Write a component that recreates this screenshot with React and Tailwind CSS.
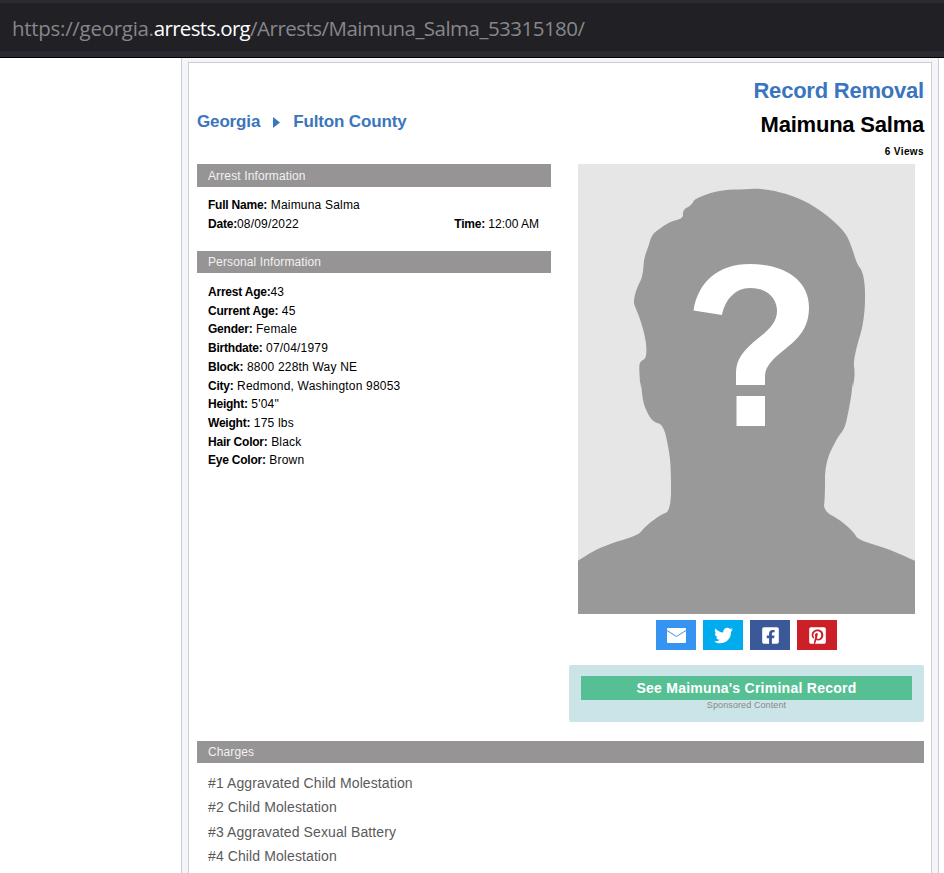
import React from "react";
import { FaTwitter, FaFacebookSquare, FaPinterestSquare } from "react-icons/fa";

const left6 = [[24,542],[75,510],[130,488],[175,475],[210,460],[225,440],[270,405],[303,392],[303,260],[295,200],[280,135],[250,125],[235,105],[220,70],[215,30],[212,0]];
const left5 = [[212,690],[208,640],[208,605],[230,595],[228,540],[210,475],[195,440],[190,425],[200,385],[218,350],[222,295],[235,260],[245,225],[270,205],[300,185],[340,175],[338,150],[365,135],[375,115],[450,90],[520,88],[570,85],[640,98],[710,125],[770,165],[825,215],[845,260],[860,310],[878,335],[885,380],[885,440],[878,500],[860,560],[850,610],[855,640],[848,690]];
const right6 = [[848,0],[845,40],[838,80],[825,145],[800,175],[765,250],[765,350],[760,392],[810,420],[850,455],[865,480],[950,505],[1035,542]];

function smooth(pts) {
  const out = [pts[0]];
  for (let i = 0; i < pts.length - 1; i++) {
    const [ax, ay] = pts[i];
    const [bx, by] = pts[i + 1];
    out.push([ax * 0.75 + bx * 0.25, ay * 0.75 + by * 0.25]);
    out.push([ax * 0.25 + bx * 0.75, ay * 0.25 + by * 0.75]);
  }
  out.push(pts[pts.length - 1]);
  return out;
}

const outline = smooth(smooth([
  ...left6.map(([x, y]) => [x / 3 - 8, y / 3 + 216]),
  ...left5.map(([x, y]) => [x / 3 - 8, y / 3 - 4]),
  ...right6.map(([x, y]) => [x / 3 - 8, y / 3 + 216]),
]));
const silhouette = [...outline, [337, 450], [0, 450]]
  .map(p => p.map(n => n.toFixed(1)).join(","))
  .join(" ");

function Silhouette() {
  return (
    <svg viewBox="0 0 337 450" className="block h-[450px] w-[337px]">
      <rect width="337" height="450" fill="#e6e6e6" />
      <polygon points={silhouette} fill="#999999" />
      <path
        d="M115.5 146.5 L144 151 C147 136 157 124 172 124 C190 124 199 135 199 147 C199 160 188 168 178 176 C166 186 158 195 158 209 L158 221 L187 221 L187 212 C187 202 196 194 206 186 C221 174 231 164 231 143 C231 117 208 100 172 100 C140 100 120 118 115.5 146.5 Z"
        fill="#ffffff"
      />
      <rect x="158.5" y="232" width="28.5" height="30" fill="#ffffff" />
    </svg>
  );
}

function MailIcon() {
  return (
    <svg viewBox="0 0 19 15" className="h-[15px] w-[19px]">
      <rect width="19" height="15" rx="1" fill="#ffffff" />
      <path d="M0 2.5 L9.5 8.5 L19 2.5" fill="none" stroke="#3593f2" strokeWidth="1" />
    </svg>
  );
}

function SectionHead({ children, className = "" }) {
  return (
    <div className={"bg-[#969494] pl-[11px] text-[12px] tracking-[0.12px] text-[#f2f2f2] " + className}>
      {children}
    </div>
  );
}

function Label({ children }) {
  return <b className="font-bold tracking-[-0.22px]">{children}</b>;
}

function Row({ label, value }) {
  return (
    <div className="h-[18.72px] leading-[18.72px] tracking-[0.2px]">
      <Label>{label}</Label>
      {value}
    </div>
  );
}

const personal = [
  ["Arrest Age:", "43"],
  ["Current Age:", " 45"],
  ["Gender:", " Female"],
  ["Birthdate:", " 07/04/1979"],
  ["Block:", " 8800 228th Way NE"],
  ["City:", " Redmond, Washington 98053"],
  ["Height:", " 5'04\""],
  ["Weight:", " 175 lbs"],
  ["Hair Color:", " Black"],
  ["Eye Color:", " Brown"],
];

const charges = [
  "#1 Aggravated Child Molestation",
  "#2 Child Molestation",
  "#3 Aggravated Sexual Battery",
  "#4 Child Molestation",
];

function ShareButton({ bg, children }) {
  return (
    <a className={"flex h-[30px] w-[40px] items-center justify-center text-white " + bg}>{children}</a>
  );
}

export default function App() {
  return (
    <div className="h-[873px] w-[944px] overflow-hidden bg-white font-['Liberation_Sans',Arial,sans-serif] text-black">
      <div className="h-[58px] border-b border-black bg-[#2b2a33] pt-[3px]">
        <div className="flex h-[48px] items-center bg-[#202025] pl-[12px] pt-[3px] font-['Open_Sans',sans-serif] text-[20.5px] text-[#87878b]">
          <span className="tracking-[-0.29px]">https://georgia.</span>
          <span className="tracking-[-0.67px] text-white">arrests.org</span>
          <span className="tracking-[-0.52px]">/Arrests/Maimuna_Salma_53315180/</span>
        </div>
      </div>

      <div className="ml-[181px] h-[815px] w-[758px] border-x border-[#cccdd2] bg-[#f4f5f8] pl-[6px] pt-[4px]">
        <div className="h-[900px] w-[744px] border border-[#cccdd2] bg-white pl-[8px] pr-[7px]">
          <div className="flex h-[101px] items-start justify-between">
            <div className="mt-[49px] flex items-center text-[17px] leading-[20px] font-bold tracking-[-0.15px] text-[#3b75bd]">
              <span>Georgia</span>
              <svg viewBox="0 0 7 11" className="mx-[13px] h-[11px] w-[7px]">
                <path d="M0 0 L7 5.5 L0 11 Z" fill="#3b75bd" />
              </svg>
              <span>Fulton County</span>
            </div>
            <div className="text-right">
              <div className="mt-[15px] text-[22px] leading-[26px] font-bold tracking-[-0.22px] text-[#3b75bd]">Record Removal</div>
              <div className="mt-[8px] text-[22px] leading-[26px] font-bold tracking-[-0.22px]">Maimuna Salma</div>
              <div className="mt-[8px] text-[10px] leading-[12px] font-bold tracking-[0.4px]">6 Views</div>
            </div>
          </div>

          <div className="flex items-start">
            <div className="w-[354px]">
              <SectionHead className="h-[23px] leading-[24px]">Arrest Information</SectionHead>
              <div className="px-[11px] pt-[9.4px] text-[12px]">
                <Row label="Full Name:" value=" Maimuna Salma" />
                <div className="flex h-[18.32px] justify-between pr-[1px] leading-[18.72px]">
                  <span className="tracking-[0.2px]"><Label>Date:</Label>08/09/2022</span>
                  <span><Label>Time:</Label> 12:00 AM</span>
                </div>
              </div>
              <SectionHead className="mt-[18px] h-[22px] leading-[22px]">Personal Information</SectionHead>
              <div className="px-[11px] pt-[9.6px] text-[12px]">
                {personal.map(([l, v]) => <Row key={l} label={l} value={v} />)}
              </div>
            </div>

            <div className="ml-[18px] w-[355px]">
              <div className="flex justify-center">
                <Silhouette />
              </div>
              <div className="mt-[6px] flex justify-center gap-[7px]">
                <ShareButton bg="bg-[#3593f2]"><MailIcon /></ShareButton>
                <ShareButton bg="bg-[#00aced]"><FaTwitter size={19} /></ShareButton>
                <ShareButton bg="bg-[#3b5998]"><FaFacebookSquare size={19} /></ShareButton>
                <ShareButton bg="bg-[#cb2027]"><FaPinterestSquare size={19} /></ShareButton>
              </div>
              <div className="mt-[15px] h-[57px] rounded-[2px] bg-[#cbe4e7] px-[12px] pt-[11px]">
                <div className="h-[24px] bg-[#57bf94] text-center text-[14px] leading-[24px] font-bold tracking-[0.26px] text-white">
                  See Maimuna's Criminal Record
                </div>
                <div className="text-center text-[9px] leading-[10px] tracking-[0.1px] text-[#888888]">Sponsored Content</div>
              </div>
            </div>
          </div>

          <SectionHead className="mt-[19px] h-[22px] leading-[22px]">Charges</SectionHead>
          <div className="pl-[11px] pt-[8px] text-[14px] tracking-[0.1px] text-[#5a5a5a]">
            {charges.map(c => <div key={c} className="h-[24.4px] leading-[24.4px]">{c}</div>)}
          </div>
        </div>
      </div>
    </div>
  );
}
